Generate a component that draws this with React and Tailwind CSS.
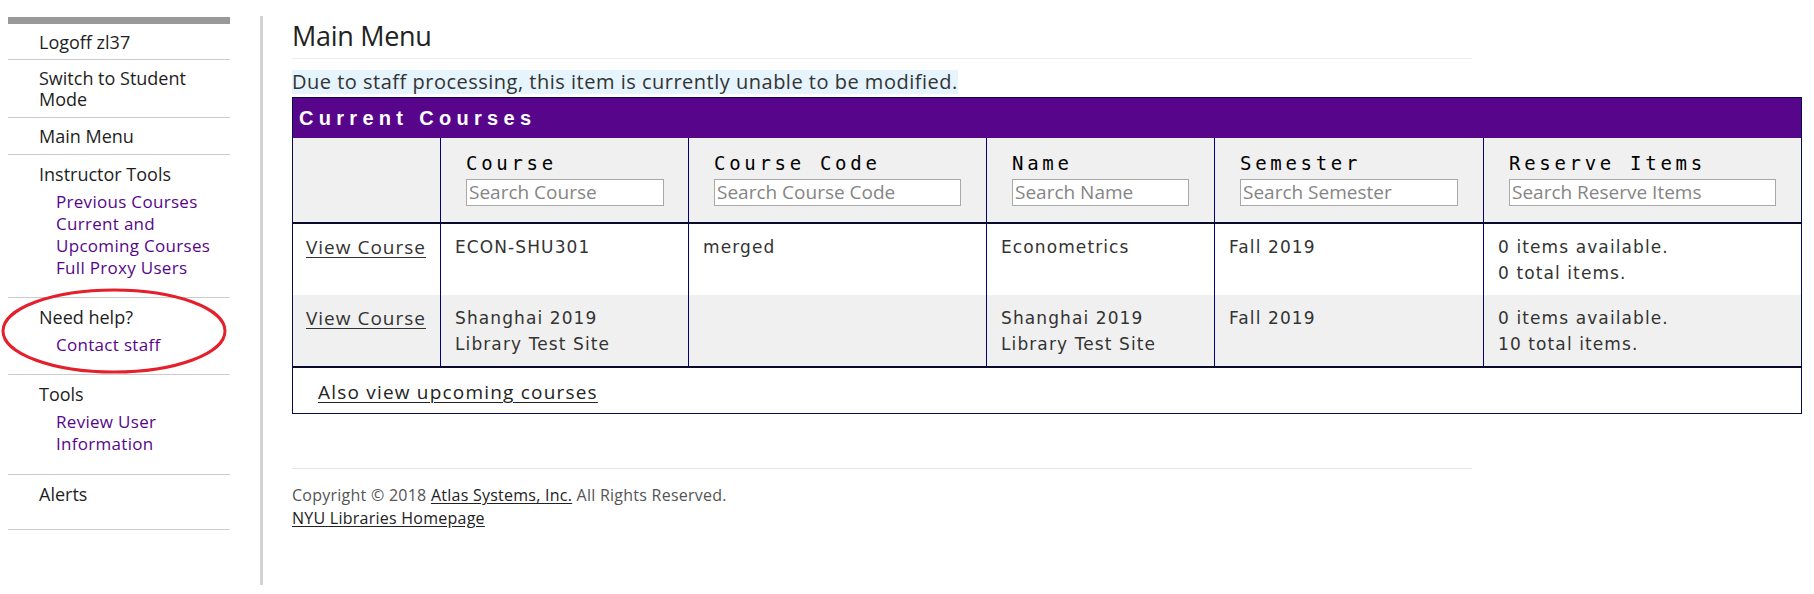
import React from 'react';

const SANS = { fontFamily: '"Open Sans", "Liberation Sans", sans-serif' };

const NAV = [
    { title: ['Logoff zl37'], links: [], pad: 'pt-[8px] pb-[6px]' },
    { title: ['Switch to Student', 'Mode'], links: [], pad: 'pt-[8px] pb-[7px]' },
    { title: ['Main Menu'], links: [], pad: 'pt-[8px] pb-[7px]' },
    { title: ['Instructor Tools'], links: [['Previous Courses'], ['Current and', 'Upcoming Courses'], ['Full Proxy Users']], pad: 'pt-[9px] pb-[18px]' },
    { title: ['Need help?'], links: [['Contact staff']], pad: 'pt-[9px] pb-[18px]' },
    { title: ['Tools'], links: [['Review User', 'Information']], pad: 'pt-[9px] pb-[19px]' },
    { title: ['Alerts'], links: [], pad: 'pt-[9px] pb-[24px]' },
];

const COLUMNS = [
    { label: 'Course', placeholder: 'Search Course', input: 'w-[198px]' },
    { label: 'Course Code', placeholder: 'Search Course Code', input: 'w-[247px]' },
    { label: 'Name', placeholder: 'Search Name', input: 'w-[177px]' },
    { label: 'Semester', placeholder: 'Search Semester', input: 'w-[218px]' },
    { label: 'Reserve Items', placeholder: 'Search Reserve Items', input: 'w-[267px]' },
];

const ROWS = [
    { course: ['ECON-SHU301'], code: 'merged', name: ['Econometrics'], semester: 'Fall 2019', items: ['0 items available.', '0 total items.'], bg: 'bg-white' },
    { course: ['Shanghai 2019', 'Library Test Site'], code: '', name: ['Shanghai 2019', 'Library Test Site'], semester: 'Fall 2019', items: ['0 items available.', '10 total items.'], bg: 'bg-[#f0f0f0]' },
];

function Lines({ lines }) {
    return lines.map((l, i) => <div key={i}>{l}</div>);
}

function Sidebar() {
    return (
        <aside className="relative ml-[8px] mt-[17px] w-[222px] shrink-0" style={SANS}>
            <div className="h-[7px] bg-[#999999]" />
            {NAV.map((item, i) => (
                <div key={i} className={`border-b border-[#cccccc] pl-[31px] ${item.pad}`}>
                    <div className="text-[18px] leading-[21px] text-[#1e1e1e]">
                        <Lines lines={item.title} />
                    </div>
                    {item.links.length > 0 && (
                        <div className="mt-[6px] pl-[17px] text-[17px] leading-[22px] text-[#57068c] tracking-[0.3px]">
                            {item.links.map((l, j) => <div key={j}><Lines lines={l} /></div>)}
                        </div>
                    )}
                </div>
            ))}
            {/* hand-drawn annotation round "Need help?" */}
            <svg className="absolute left-[-8px] top-[268px] pointer-events-none" width="232" height="92" viewBox="0 0 232 92">
                <ellipse cx="114" cy="46" rx="111" ry="41" fill="none" stroke="#e3202b" strokeWidth="3" />
            </svg>
        </aside>
    );
}

function CoursesTable() {
    return (
        <table className="mt-[3px] w-[1509px] border-collapse border border-[#0a0a50] table-fixed">
            <colgroup>
                <col className="w-[148px]" />
                <col className="w-[248px]" />
                <col className="w-[298px]" />
                <col className="w-[228px]" />
                <col className="w-[269px]" />
                <col className="w-[318px]" />
            </colgroup>
            <thead>
                <tr>
                    <th colSpan={6} className="h-[40px] bg-[#57068c] pl-[6px] text-left text-[20px] font-bold text-white tracking-[5.3px]"
                        style={{ fontFamily: '"Liberation Sans", Arial, sans-serif' }}>
                        Current Courses
                    </th>
                </tr>
                <tr className="bg-[#f0f0f0] border-b-2 border-[#0a0a2a]">
                    <th className="border-r border-[#000080]" />
                    {COLUMNS.map((c, i) => (
                        <th key={c.label} className={`${i < 4 ? 'border-r border-[#000080]' : ''} pl-[25px] pt-[13px] pb-[16px] text-left font-normal align-top`}>
                            <div className="text-[19px] leading-[25px] tracking-[3.7px] text-black" style={{ fontFamily: '"DejaVu Sans Mono", monospace' }}>
                                {c.label}
                            </div>
                            <input
                                placeholder={c.placeholder}
                                className={`${c.input} mt-[3px] h-[27px] border border-[#a9a9a9] bg-white px-[2px] text-[19px] text-[#333] placeholder:text-[#858585] outline-none`}
                                style={SANS}
                            />
                        </th>
                    ))}
                </tr>
            </thead>
            <tbody className="text-[17px] leading-[26px] tracking-[1.1px] text-[#333]" style={{ fontFamily: '"DejaVu Sans", Verdana, sans-serif' }}>
                {ROWS.map((r, i) => (
                    <tr key={i} className={`${r.bg} ${i === ROWS.length - 1 ? 'border-b-2 border-[#0a0a2a]' : ''} align-top`}>
                        <td className="h-[72px] border-r border-[#000080] pl-[13px] pt-[10px]">
                            <a href="#" className="text-[19px] leading-[26px] tracking-[1px] text-[#333] underline underline-offset-[3px] decoration-1" style={SANS}>View Course</a>
                        </td>
                        <td className="border-r border-[#000080] pl-[14px] pt-[10px]"><Lines lines={r.course} /></td>
                        <td className="border-r border-[#000080] pl-[14px] pt-[10px]">{r.code}</td>
                        <td className="border-r border-[#000080] pl-[14px] pt-[10px]"><Lines lines={r.name} /></td>
                        <td className="border-r border-[#000080] pl-[14px] pt-[10px]">{r.semester}</td>
                        <td className="pl-[14px] pt-[10px]"><Lines lines={r.items} /></td>
                    </tr>
                ))}
                <tr>
                    <td colSpan={6} className="h-[47px] pl-[25px] pt-[4px] align-middle">
                        <a href="#" className="text-[19px] tracking-[1.2px] text-[#222] underline underline-offset-[3px] decoration-1" style={SANS}>
                            Also view upcoming courses
                        </a>
                    </td>
                </tr>
            </tbody>
        </table>
    );
}

export default function App() {
    return (
        <div className="flex min-h-[594px] bg-white">
            <Sidebar />
            <div className="ml-[30px] mt-[16px] h-[569px] w-[3px] shrink-0 bg-[#d3d3d3]" />
            <main className="ml-[29px] flex flex-col" style={SANS}>
                <h1 className="pt-[20px] text-[27px] leading-[32px] text-[#222] tracking-[-0.3px]">Main Menu</h1>
                <div className="mt-[6px] w-[1180px] border-t border-[#eeeeee]" />
                <div className="mt-[11px] self-start bg-[#e6f4fd] text-[20px] leading-[24px] tracking-[0.5px] text-[#333]">
                    Due to staff processing, this item is currently unable to be modified.
                </div>
                <CoursesTable />
                <div className="mt-[54px] w-[1180px] border-t border-[#e5e5e5]" />
                <footer className="mt-[15px] text-[16px] leading-[23px] tracking-[0.25px] text-[#555]">
                    <div>
                        Copyright © 2018 <a href="#" className="text-[#222] underline underline-offset-2">Atlas Systems, Inc.</a> All Rights Reserved.
                    </div>
                    <a href="#" className="text-[#222] underline underline-offset-2">NYU Libraries Homepage</a>
                </footer>
            </main>
        </div>
    );
}
